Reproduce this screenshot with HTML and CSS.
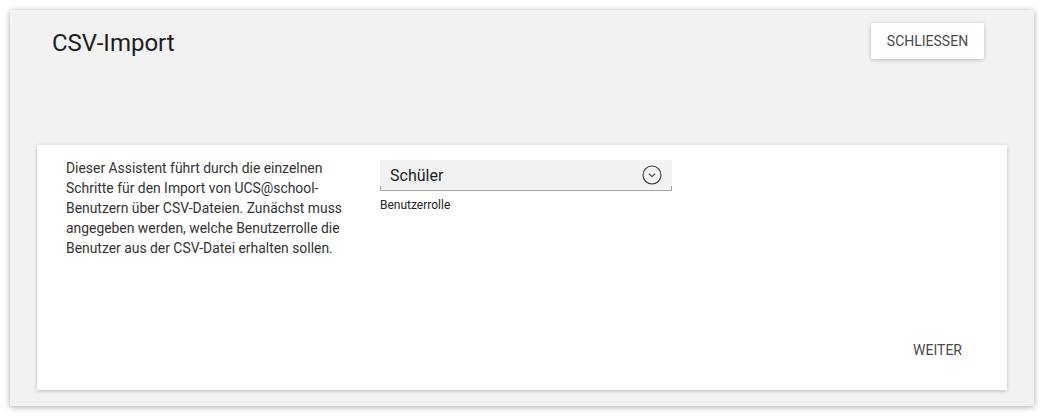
FILE: index.html
```html
<!DOCTYPE html>
<html lang="de">
<head>
<meta charset="utf-8">
<title>CSV-Import</title>
<link rel="stylesheet" href="styles.css">
</head>
<body>
<div class="dialog">
  <div class="dialog-header">
    <h1 class="title">CSV-Import</h1>
    <button class="btn-raised">Schliessen</button>
  </div>
  <div class="card">
    <div class="card-body">
      <p class="intro">Dieser Assistent führt durch die einzelnen Schritte für den Import von UCS@school-Benutzern über CSV-Dateien. Zunächst muss angegeben werden, welche Benutzerrolle die Benutzer aus der CSV-Datei erhalten sollen.</p>
      <div class="field">
        <div class="select">
          <span class="select-value">Schüler</span>
          <svg class="select-icon" width="20" height="20" viewBox="0 0 20 20">
            <circle cx="10" cy="10" r="9" fill="none" stroke="#333" stroke-width="1.1"/>
            <path d="M6.8 8.6 L10 11.6 L13.2 8.6" fill="none" stroke="#333" stroke-width="1.1"/>
          </svg>
        </div>
        <div class="field-label">Benutzerrolle</div>
      </div>
    </div>
    <div class="card-footer">
      <button class="btn-flat">Weiter</button>
    </div>
  </div>
</div>
</body>
</html>
```

FILE: styles.css
```css
html, body {
  margin: 0;
  padding: 0;
  background: #ffffff;
}
body {
  padding: 10px;
  font-family: Roboto, "Liberation Sans", sans-serif;
  color: #1e1e1e;
}
.dialog {
  width: 1024px;
  height: 396px;
  box-sizing: border-box;
  background: #f2f2f2;
  box-shadow: 0 1px 6px rgba(0,0,0,0.35);
  padding: 0 27px 0 27px;
  display: flex;
  flex-direction: column;
}
.dialog-header {
  display: flex;
  justify-content: space-between;
  align-items: flex-start;
  height: 135px;
  padding: 0 23px 0 15px;
}
.title {
  margin: 18px 0 0 0;
  font-size: 24px;
  font-weight: 400;
  line-height: 30px;
  color: #1e1e1e;
}
.btn-raised {
  margin-top: 13px;
  width: 113px;
  height: 36px;
  border: none;
  border-radius: 2px;
  background: #ffffff;
  box-shadow: 0 1px 4px rgba(0,0,0,0.22);
  font-family: Roboto, "Liberation Sans", sans-serif;
  font-size: 14px;
  font-weight: 400;
  text-transform: uppercase;
  color: #4a4a4a;
  padding: 0;
}
.card {
  background: #ffffff;
  height: 245px;
  box-shadow: 0 1px 4px rgba(0,0,0,0.22);
  display: flex;
  flex-direction: column;
  justify-content: space-between;
}
.card-body {
  display: flex;
  padding: 13px 0 0 29px;
  gap: 29px;
}
.intro {
  margin: 0;
  width: 285px;
  font-size: 13.9px;
  line-height: 20px;
  color: #333333;
}
.field {
  margin-top: 2px;
  width: 292px;
}
.select {
  position: relative;
  height: 30px;
  background: #f2f2f2;
  border-bottom: 1px solid #a8a8a8;
  display: flex;
  align-items: center;
  justify-content: space-between;
  padding: 0 10px 0 10px;
}
.select::before,
.select::after {
  content: "";
  position: absolute;
  bottom: -1px;
  width: 1px;
  height: 5px;
  background: #a8a8a8;
}
.select::before { left: 0; }
.select::after { right: 0; }
.select-value {
  font-size: 16px;
  color: #1e1e1e;
}
.select-icon {
  display: block;
}
.field-label {
  margin-top: 7px;
  font-size: 12px;
  color: #222222;
}
.card-footer {
  display: flex;
  justify-content: flex-end;
  padding: 0 33px 24px 0;
}
.btn-flat {
  border: none;
  background: transparent;
  font-family: Roboto, "Liberation Sans", sans-serif;
  font-size: 14px;
  text-transform: uppercase;
  color: #4a4a4a;
  padding: 8px 12px;
}
```
